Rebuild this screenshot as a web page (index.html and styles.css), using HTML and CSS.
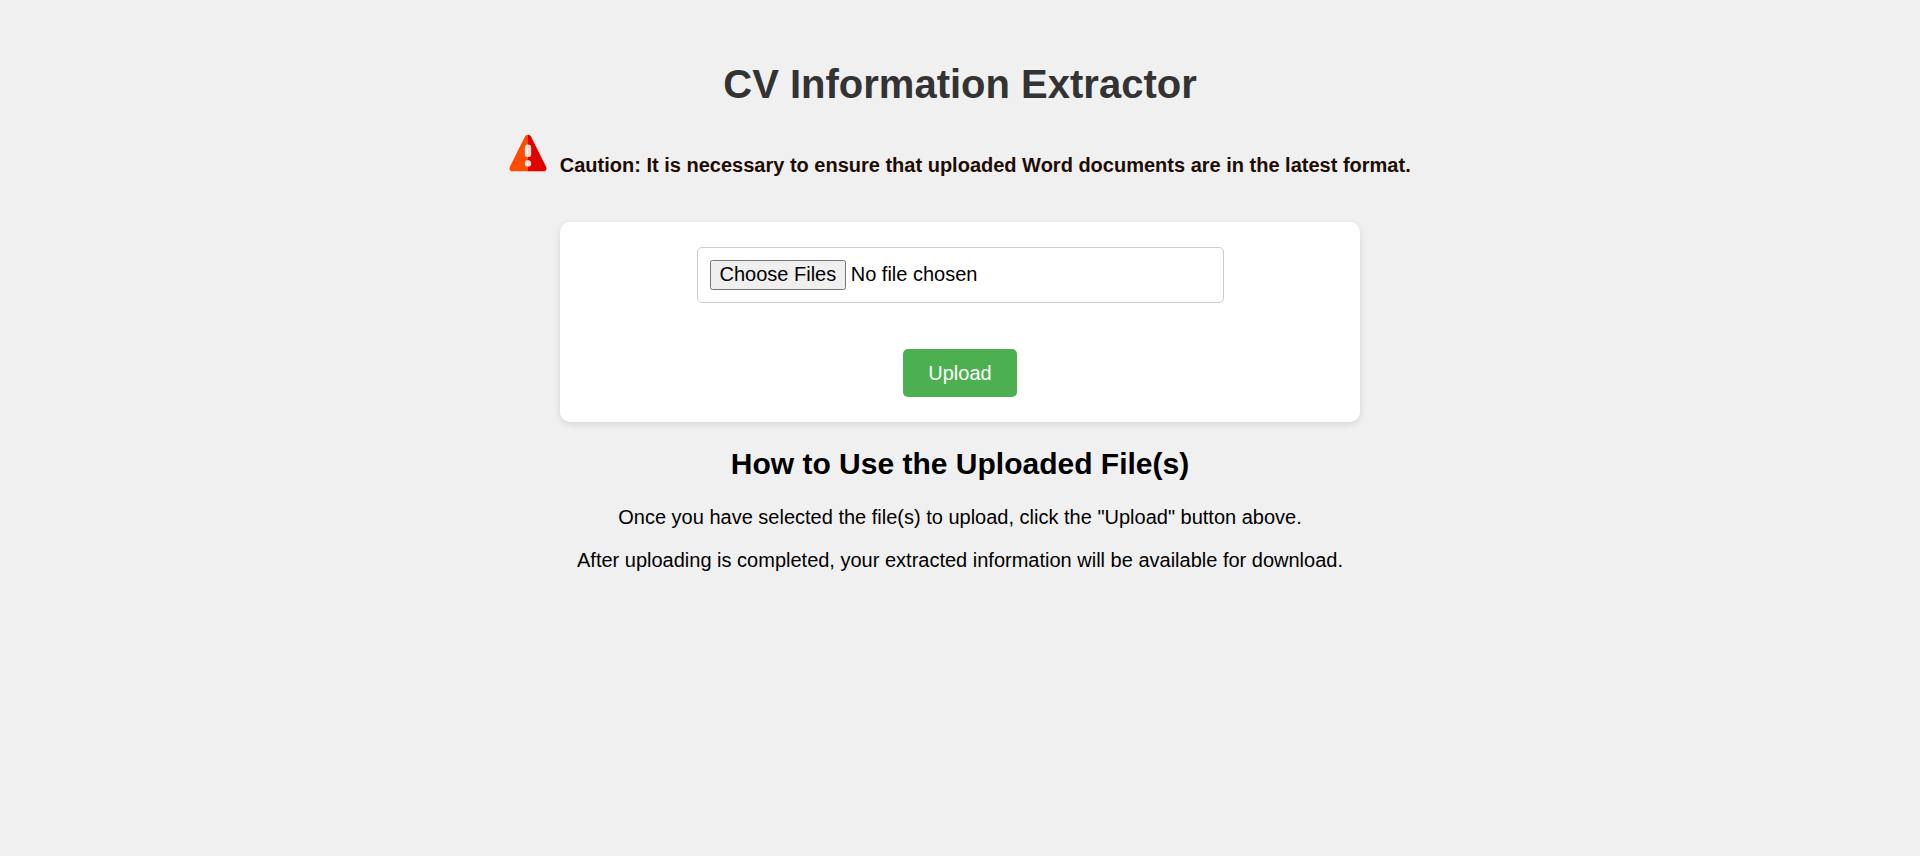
FILE: index.html
```html
<!DOCTYPE html>
<html lang="en">
<head>
<meta charset="utf-8">
<title>CV Information Extractor</title>
<link rel="stylesheet" href="styles.css">
</head>
<body>
<h1 class="title">CV Information Extractor</h1>
<div class="caution">
  <svg class="caution-icon" viewBox="0 0 38 38" aria-hidden="true">
    <path fill="#ff4b00" d="M19 .8c-1.400 0-2.400.7-3.100 1.900L.8 33c-1 2 .3 4.300 2.500 4.300H19z"/>
    <path fill="#e00000" d="M19 .8c1.400 0 2.400.7 3.100 1.900L37.200 33c1 2-.3 4.300-2.500 4.300H19z"/>
    <path fill="#fff0e8" d="M19 10.500a3.200 3.200 0 0 0-3.200 3.200v6.200a3.200 3.200 0 0 0 3.200 3.200zM19 26.200a3.200 3.200 0 0 0 0 6.400z"/>
    <path fill="#ffd5d5" d="M19 10.500a3.200 3.200 0 0 1 3.200 3.200v6.200a3.200 3.200 0 0 1-3.200 3.200zM19 26.200a3.200 3.200 0 0 1 0 6.400z"/>
  </svg>
  <span class="caution-text">Caution: It is necessary to ensure that uploaded Word documents are in the latest format.</span>
</div>
<form class="upload-form">
  <input class="file-input" type="file" multiple aria-label="CV files">
  <button class="upload-button" type="button">Upload</button>
</form>
<h2 class="subtitle">How to Use the Uploaded File(s)</h2>
<p class="note">Once you have selected the file(s) to upload, click the "Upload" button above.</p>
<p class="note">After uploading is completed, your extracted information will be available for download.</p>
</body>
</html>
```
FILE: styles.css
```css
* {
  box-sizing: border-box;
}

body {
  margin: 0;
  padding-top: 61px;
  background: #f0f0f0;
  color: #000;
  font-family: "Liberation Sans", Arial, sans-serif;
  font-size: 20px;
  line-height: 23px;
  text-align: center;
}

.title {
  margin: 0 0 27px;
  color: #333;
  font-size: 40px;
  line-height: 46px;
}

.caution {
  display: flex;
  justify-content: center;
  align-items: flex-end;
  gap: 12.5px;
  height: 43px;
  margin-bottom: 45px;
  color: #1f0d05;
  font-weight: bold;
}

.caution-icon {
  width: 38px;
  height: 38px;
  margin-bottom: 5px;
}

.upload-form {
  display: flex;
  flex-direction: column;
  align-items: center;
  justify-content: space-between;
  width: 800px;
  height: 200px;
  margin: 0 auto 25px;
  padding: 25px;
  background: #fff;
  border-radius: 10px;
  box-shadow: 0 2.5px 6.25px rgba(0, 0, 0, 0.1);
}

.file-input {
  width: 527px;
  height: 56px;
  padding: 12px;
  border: 1px solid #ccc;
  border-radius: 5px;
  color: #000;
  font: inherit;
}

.file-input::file-selector-button {
  height: 30px;
  margin: 0 4.5px 0 0;
  padding: 0 9px 2px;
  background: #efefef;
  border: 1px solid #767676;
  border-radius: 2.5px;
  color: #000;
  font: inherit;
}

.upload-button {
  width: 114px;
  height: 48px;
  padding: 0;
  border: 0;
  border-radius: 5px;
  background: #4caf50;
  color: #fff;
  font: inherit;
}

.subtitle {
  margin: 0 0 25px;
  font-size: 30px;
  line-height: 34px;
}

.note {
  margin: 0 0 20px;
}
```
